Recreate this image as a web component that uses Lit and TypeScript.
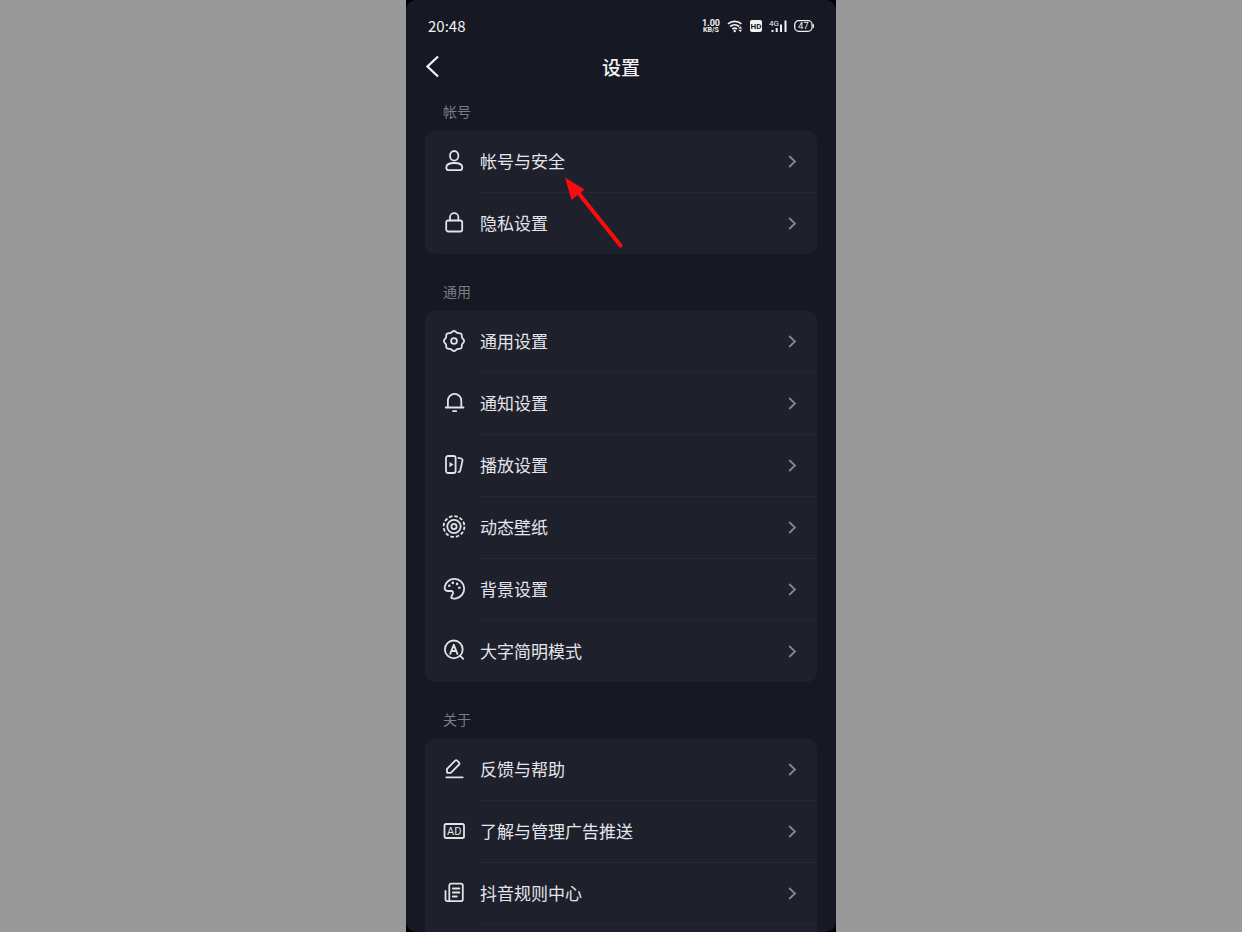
import { LitElement, html, svg, css, type SVGTemplateResult } from "lit";
import { customElement, property } from "lit/decorators.js";

/** Closed outline of a gear with soft teeth, sampled around its centre. */
function gearPath(cx: number, cy: number, radius: number, depth: number, teeth: number): string {
  const steps = teeth * 12;
  const points: string[] = [];
  for (let i = 0; i < steps; i++) {
    const a = (i / steps) * Math.PI * 2;
    const r = radius + depth * Math.cos(a * teeth);
    points.push(`${(cx + r * Math.sin(a)).toFixed(2)} ${(cy - r * Math.cos(a)).toFixed(2)}`);
  }
  return `M${points.join("L")}Z`;
}

const icons: Record<string, SVGTemplateResult> = {
  person: svg`
    <ellipse cx="12.2" cy="6.800" rx="4.200" ry="4.800" />
    <path d="M12.3 14c-4.900 0-8 1.700-8 4.400 0 1.700 1 2.800 2.800 2.800h10.400c1.800 0 2.800-1.100 2.800-2.800 0-2.700-3.100-4.400-8-4.400z" />`,
  lock: svg`
    <rect x="4.200" y="9.500" width="16" height="11" rx="2" />
    <path d="M8 9.500V6.400a4.200 4.200 0 0 1 8.400 0v3.100" />`,
  gear: svg`
    <path d=${gearPath(12, 12, 9.4, 0.7, 8)} />
    <circle cx="12" cy="12" r="2.900" />`,
  bell: svg`
    <path d="M3.700 16.500h17.800M5.900 16.500V9.500a6.700 6.700 0 0 1 13.400 0v7M11 20.200h3.200" />`,
  play: svg`
    <rect x="4" y="3" width="9.600" height="17" rx="2" />
    <path d="M16.400 4.800l2.800.7c1 .3 1.500 1 1.300 2.100l-2.300 10.100q-.4 1.300-1.700 1.500" />
    <path class="solid" d="M7.500 8.900v5.400l4-2.700z" />`,
  wallpaper: svg`
    <circle class="dashes" cx="12" cy="11.500" r="10.400" />
    <circle cx="12" cy="11.500" r="6.700" />
    <circle cx="12" cy="11.500" r="2.600" />`,
  palette: svg`
    <path d="M9.600 21.200c1.500.5 3.200.5 4.700.1A9.800 9.800 0 1 0 2.700 10c-.3 2.400.8 4 3 4h3.200c1.900 0 2.600 1.300 1.900 2.800l-1.300 2.600c-.4.800-.4 1.500.1 1.800z" />
    <g class="solid"><circle cx="7.300" cy="8.700" r="1.300" /><circle cx="10.800" cy="5.900" r="1.300" /><circle cx="15.100" cy="6.900" r="1.300" /><circle cx="17.400" cy="10.800" r="1.300" /></g>`,
  letter: svg`
    <circle cx="11.800" cy="10.400" r="8.900" />
    <path d="M18 16.600l3.200 3.200M8.200 14.800l3.600-9 3.600 9M9.500 12h4.600" />`,
  pencil: svg`
    <path d="M4.300 20.300h16.400M5.200 15.900l-.4-3.700 8.400-8.600c.6-.6 1.300-.6 1.900 0l2 2c.6.6.6 1.300 0 1.900l-8.300 8.300z" />`,
  ad: svg`
    <rect x="2.500" y="5" width="19.500" height="14" rx="1.600" />
    <text x="12.300" y="16" text-anchor="middle">AD</text>`,
  rules: svg`
    <path d="M7.300 20.200V4.600c0-1.200.7-1.900 1.900-1.900h9.700c1.200 0 1.900.7 1.900 1.900v13.700c0 1.200-.7 1.900-1.900 1.900H5.400c-1.200 0-1.900-.7-1.900-1.900V9.800M10.800 7.500h6.600M10.800 11.500h6.600M10.800 15.500h4" />`,
};

interface Item {
  icon: string;
  label: string;
}

interface Group {
  title: string;
  items: Item[];
  pointer?: boolean;
  continues?: boolean;
}

const groups: Group[] = [
  {
    title: "帐号",
    pointer: true,
    items: [
      { icon: "person", label: "帐号与安全" },
      { icon: "lock", label: "隐私设置" },
    ],
  },
  {
    title: "通用",
    items: [
      { icon: "gear", label: "通用设置" },
      { icon: "bell", label: "通知设置" },
      { icon: "play", label: "播放设置" },
      { icon: "wallpaper", label: "动态壁纸" },
      { icon: "palette", label: "背景设置" },
      { icon: "letter", label: "大字简明模式" },
    ],
  },
  {
    title: "关于",
    continues: true,
    items: [
      { icon: "pencil", label: "反馈与帮助" },
      { icon: "ad", label: "了解与管理广告推送" },
      { icon: "rules", label: "抖音规则中心" },
    ],
  },
];

@customElement("settings-row")
export class SettingsRow extends LitElement {
  @property() icon = "";
  @property() label = "";

  static styles = css`
    :host {
      display: block;
    }
    .row {
      display: flex;
      align-items: center;
      height: 61px;
      padding: 0 20px 0 17px;
      color: #e6e6ea;
      text-decoration: none;
    }
    .icon {
      flex: none;
      width: 25px;
      height: 25px;
      margin-right: 13px;
      fill: none;
      stroke: #e2e2e8;
      stroke-width: 1.8;
      stroke-linecap: round;
      stroke-linejoin: round;
    }
    .icon .solid {
      fill: #e2e2e8;
      stroke: none;
    }
    .icon .dashes {
      stroke-dasharray: 3.5 1.945;
      stroke-linecap: butt;
    }
    .icon text {
      fill: #e2e2e8;
      stroke: none;
      font: 400 11px Roboto, sans-serif;
    }
    .label {
      flex: 1;
      padding-bottom: 2px;
      font-size: 17px;
      line-height: 23px;
    }
    .chevron {
      flex: none;
      width: 9px;
      height: 13px;
      fill: none;
      stroke: #85868f;
      stroke-width: 1.8;
    }
  `;

  render() {
    return html`<a class="row" href="#">
      <svg class="icon" viewBox="0 0 25 25" aria-hidden="true">${icons[this.icon]}</svg>
      <span class="label">${this.label}</span>
      <svg class="chevron" viewBox="0 0 9 13" aria-hidden="true"><path d="M1.200 1l5.800 5.500L1.200 12" /></svg>
    </a>`;
  }
}

@customElement("status-bar")
export class StatusBar extends LitElement {
  static styles = css`
    :host {
      display: flex;
      align-items: center;
      justify-content: space-between;
      height: 44px;
      padding: 4px 22px 0;
      color: #f2f2f5;
    }
    .time {
      font-size: 15px;
      line-height: 20px;
    }
    .tray {
      display: flex;
      align-items: center;
      gap: 7px;
    }
    .speed {
      display: grid;
      justify-items: center;
      font: 700 9px/8px Roboto, sans-serif;
    }
    .unit {
      font-size: 7px;
      line-height: 7px;
    }
    svg {
      display: block;
      height: 14px;
      fill: none;
      stroke: currentColor;
    }
    .solid {
      fill: currentColor;
      stroke: none;
    }
    text {
      fill: currentColor;
      stroke: none;
      font-family: Roboto, sans-serif;
    }
    .hd {
      fill: #161823;
      font-size: 8px;
      font-weight: 700;
    }
    .net {
      font-size: 8px;
    }
    .level {
      font-size: 9px;
    }
  `;

  render() {
    return html`
      <span class="time">20:48</span>
      <div class="tray">
        <div class="speed"><span>1.00</span><span class="unit">KB/S</span></div>
        <svg width="16" viewBox="0 0 16 14" stroke-width="1.700" aria-label="Wi-Fi">
          <path d="M1 4.900a10 10 0 0 1 13.400 0M3.200 7.500a6.800 6.800 0 0 1 9 0M5.400 10a3.600 3.600 0 0 1 4.600 0" />
          <circle class="solid" cx="7.700" cy="12" r="1.200" />
          <path class="solid" d="M13.300 7.300l1.900 2.200h-3.800zM13.300 13l1.900-2.200h-3.800z" />
        </svg>
        <svg width="12" viewBox="0 0 12 14" aria-label="HD">
          <rect class="solid" y="1" width="12" height="12" rx="2" />
          <text class="hd" x="6" y="10" text-anchor="middle">HD</text>
        </svg>
        <svg width="18" viewBox="0 0 18 14" aria-label="4G">
          <text class="net" x="0" y="7">4G</text>
          <path class="solid" d="M2.500 11h2v2h-2zM6.700 9h2v4h-2zM11 5.500h2V13h-2zM15.500 1.500h2V13h-2z" />
        </svg>
        <svg width="20" viewBox="0 0 20 14" stroke-width="1.300" aria-label="47%">
          <rect x=".7" y="1.700" width="17.400" height="10.600" rx="4" />
          <path d="M19.300 5.300v3.400" />
          <text class="level" x="9.400" y="10.200" text-anchor="middle">47</text>
        </svg>
      </div>
    `;
  }
}

@customElement("app-root")
export class AppRoot extends LitElement {
  static styles = css`
    :host {
      display: flex;
      justify-content: center;
      height: 100vh;
      background: #999;
      font-family: "Noto Sans CJK SC", sans-serif;
    }
    .device {
      display: flex;
      width: 100%;
      max-width: 430px;
      background: #000;
    }
    .screen {
      flex: 1;
      overflow: hidden;
      border-radius: 10px;
      background: #161823;
    }
    .header {
      display: grid;
      grid-template-columns: 1fr auto 1fr;
      align-items: center;
      height: 38px;
      padding: 0 19px;
      color: #f2f2f5;
    }
    .back {
      display: flex;
      width: 24px;
      padding: 0;
      border: 0;
      background: none;
      color: inherit;
      cursor: pointer;
    }
    .back svg {
      width: 16px;
      height: 24px;
      fill: none;
      stroke: currentColor;
      stroke-width: 2.3;
    }
    .title {
      margin: 0;
      font-size: 19px;
      font-weight: 500;
      line-height: 28px;
    }
    .content {
      padding: 7px 19px 0;
    }
    .group {
      margin-bottom: 19px;
    }
    .caption {
      margin: 0;
      padding: 0 0 2px 18px;
      color: #7b7c86;
      font-size: 14px;
      font-weight: 400;
      line-height: 36px;
    }
    .card {
      position: relative;
      border-radius: 9px;
      background: #1e202b;
    }
    .divider {
      height: 1px;
      margin-left: 55px;
      background: #262832;
    }
    .continues {
      padding-bottom: 61px;
    }
    .pointer {
      position: absolute;
      top: 46px;
      left: 139px;
      width: 60px;
      height: 72px;
      pointer-events: none;
    }
  `;

  private renderGroup(group: Group) {
    return html`<section class="group">
      <h2 class="caption">${group.title}</h2>
      <div class="card ${group.continues ? "continues" : ""}">
        ${group.items.map(
          (item, i) => html`${i > 0 ? html`<div class="divider"></div>` : ""}
            <settings-row .icon=${item.icon} .label=${item.label}></settings-row>`
        )}
        ${group.continues ? html`<div class="divider"></div>` : ""}
        ${group.pointer
          ? html`<svg class="pointer" viewBox="0 0 60 72" aria-hidden="true">
              <path d="M12 13L56.500 68.500" stroke="#fb0a0e" stroke-width="4" stroke-linecap="round" />
              <path d="M1 .5L20.500 12.500L7.500 23z" fill="#fb0a0e" />
            </svg>`
          : ""}
      </div>
    </section>`;
  }

  render() {
    return html`<div class="device">
      <div class="screen">
        <status-bar></status-bar>
        <header class="header">
          <button class="back" type="button" aria-label="返回">
            <svg viewBox="0 0 16 24"><path d="M13 1.500L2.500 11.500L13 21.500" /></svg>
          </button>
          <h1 class="title">设置</h1>
        </header>
        <main class="content">${groups.map((g) => this.renderGroup(g))}</main>
      </div>
    </div>`;
  }
}
